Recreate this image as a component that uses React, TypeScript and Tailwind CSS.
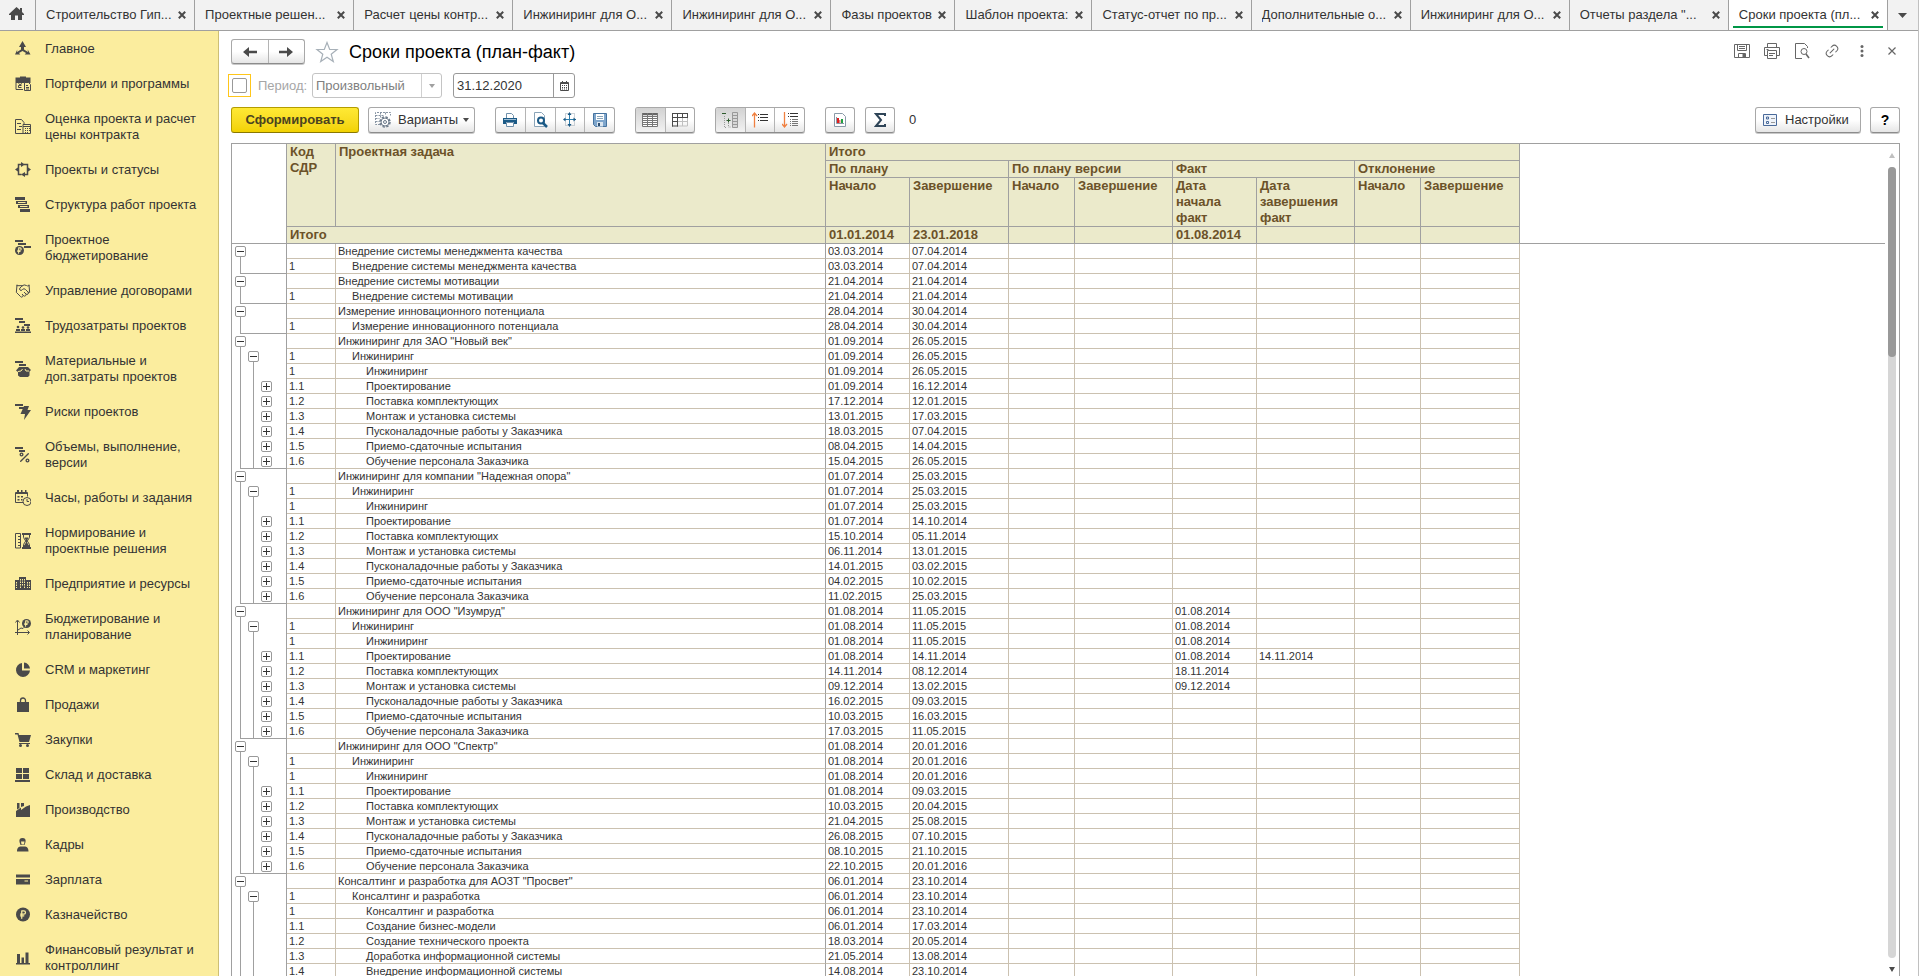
import type { ReactNode } from "react"
import { Handshake, Link2, Percent, RussianRuble } from "lucide-react"

const DARK = "#4a4a4a"
const BLUE = "#1b5a86"

function Icon({ children, size = 16 }: { children: ReactNode; size?: number }) {
  return (
    <svg width={size} height={size} viewBox={`0 0 ${size} ${size}`} fill={DARK} aria-hidden="true" className="shrink-0">
      {children}
    </svg>
  )
}

const menuIcons: Record<string, ReactNode> = {
  main: <path d="M7.500 0l3.500 6H9v2.500l4 2.500-.3-2.500L15.500 13.500H9.700l1.300-1.500-3.500-2-3.500 2 1.300 1.500H0L2.300 8.500 2 11l4-2.500V6H4z" />,
  portfolio: (
    <>
      <path d="M5 1.500V.5h6v1h4.500V7H.5V1.500z" />
      <path d="M1 7v6.500h7M6.500 9.500h-3v2h3M3.500 7.500l1.500 1.200 2-1.200" fill="none" stroke={DARK} />
      <path d="M9.500 6.500h4l2 2v6h-6zM11 9.500h2M11 11.500h3M11 13h3" fill="#FBED9E" stroke={DARK} />
    </>
  ),
  estimate: (
    <>
      <path d="M8 14.500H.5V.5h6l2.500 3V5M2 4.500h4M4 7.500h3M2 10.500h4" fill="none" stroke={DARK} />
      <path d="M8 5.500h7.500v9H8zM8 7.500h7.500" fill="none" stroke={DARK} />
      <path d="M10 9h1v1h-1zM12 9h1v1h-1zM14 9h1v1h-1zM10 11h1v1h-1zM12 11h1v1h-1zM14 11h1v1h-1zM10 13h1v1h-1zM12 13h1v1h-1z" />
    </>
  ),
  projects: (
    <>
      <path d="M6.500 2.500h-3v10h3M9 2.500h3.500v10H9" fill="none" stroke={DARK} strokeWidth="1.500" />
      <path d="M6 0l4 2.500L6 5zM10 10v5l-4-2.500zM0 7.500L3.500 5v5zM16 7.500L12.500 5v5z" />
    </>
  ),
  structure: (
    <>
      <path d="M0 0h10v3H0zM5 12h10v3H5zM1 4h11v3H1zM3 8h11v3H3z" />
      <path d="M3 5.500h7.500M5 9.500h7.500" stroke="#FBED9E" />
    </>
  ),
  budget: (
    <>
      <path d="M0 0h8v2H0zM3 3h8v2H3zM9 6h7v2H9z" />
      <circle cx="4.500" cy="10.500" r="4.500" />
      <RussianRuble x={1} y={7} size={7} color="#FBED9E" strokeWidth={3.500} />
    </>
  ),
  contracts: <Handshake size={16} color={DARK} strokeWidth={1.500} />,
  labor: (
    <>
      <path d="M0 0h8v2H0zM4 3h6v2H4zM9 6h6v2H9z" />
      <circle cx="3" cy="9" r="1.300" />
      <circle cx="8" cy="9.500" r="1.300" />
      <circle cx="13" cy="9.500" r="1.300" />
      <path d="M1 11h4v2H1zM6 11h4v2H6zM11 11h4v2h-4zM0 13.500h16V15H0z" />
    </>
  ),
  materials: (
    <>
      <path d="M0 0h8v2H0zM4 3h7v2H4z" />
      <path d="M4 6h9l3 3-1.500 1.500v4L13 16H5l-2-1.500V11L1 9.500z" />
      <path d="M3 10.500l3-.5 1.500-2M10 8l1 2h3" stroke="#FBED9E" fill="none" />
    </>
  ),
  risks: (
    <>
      <path d="M0 0h8v2H0zM4 3h5v2H4z" />
      <path d="M9 2h5l-1.500 4H16L9 16l1-6H5.500z" />
    </>
  ),
  volumes: (
    <>
      <path d="M0 0h8v2H0zM4 3h6v2H4z" />
      <Percent x={3} y={4} size={13} color={DARK} strokeWidth={2.500} />
    </>
  ),
  hours: (
    <>
      <path d="M.5 2.500h12v4M8 12.500H.5v-10M.5 3.500h12" fill="none" stroke={DARK} />
      <path d="M2 0h2v4H2zM6 0h1.500v4H6zM10 0h1.500v4H10zM2.500 6h2v1.500h-2zM6 6h2v1.500H6zM2.500 9h2v1.500h-2zM6 9h1.500v1.500H6z" />
      <path d="M16 11.500a4 4 0 11-8 0 4 4 0 018 0zM12 9v2.500h2" fill="none" stroke={DARK} />
    </>
  ),
  norms: (
    <>
      <path d="M5.500.5h-5v14.500h5zM3 3.500h2M3 6.500h2M3 9.500h2M3 12.500h2" fill="none" stroke={DARK} />
      <path d="M7 0h9v2H7zM7 14h9v2H7z" />
      <path d="M8.500 2v2.500L10.700 8l-2.200 3.500V14h6v-2.500L12.300 8l2.200-3.500V2" fill="none" stroke={DARK} />
      <path d="M9.500 4.500h4L12 7.500v2l2 3V14H9v-1.500l2-3v-2z" />
    </>
  ),
  company: (
    <>
      <path d="M0 4h4v10H0zM4 1h7v13H4zM11 4h5v10h-5z" />
      <path d="M1.500 6v6M5.500 3v10M7.500 3v7M9.500 3v10M12.500 6v6M14.500 6v6" stroke="#FBED9E" strokeDasharray="1.500 1" />
    </>
  ),
  planning: (
    <>
      <path d="M2.500 16V2M.5 3.500l2-2.500 2 2.500M0 13.500h14M12.500 11.500l2 2-2 2M3 11l3-2 2 .5 2.500-2.500" fill="none" stroke={DARK} />
      <circle cx="11.500" cy="4.500" r="4.500" />
      <RussianRuble x={8} y={1} size={7} color="#FBED9E" strokeWidth={3.500} />
    </>
  ),
  crm: <path d="M7 1v7.500h8A7 7 0 117 1zM9 0.500A6.500 6.500 0 0115 6.500H9z" />,
  sales: (
    <>
      <path d="M2 5h12v10H2z" />
      <path d="M5.500 6V3.500a2.500 2.500 0 015 0V6" fill="none" stroke={DARK} strokeWidth="1.300" />
    </>
  ),
  purchases: (
    <>
      <path d="M0 1h3.500l.5 2h12l-2 7H4.500L2.500 2.500H0z" />
      <path d="M4 11.500h11" stroke={DARK} />
      <circle cx="5.500" cy="13.500" r="1.500" />
      <circle cx="12.500" cy="13.500" r="1.500" />
    </>
  ),
  warehouse: <path d="M1 1h6v5H1zM8 1h6v5H8zM1 7h6v5H1zM8 7h6v5H8zM0 13h15v2H0z" />,
  production: <path d="M1 15V9l5-3.500V8l5-3.500L15 3v12zM2 1h2.500v5L2 7.500zM6 1h3v3L6 5z" />,
  staff: (
    <>
      <path d="M7.500 1c2.500 0 3.500 1.500 3 4l-1 3h-4l-1-3c-.5-2.500.5-4 3-4zM2 14.500c0-4 2-5 4-5h3.500c2 0 4 1 4 5z" />
      <path d="M6 4.500h3.500L9 7.500H6.500z" fill="#FBED9E" />
    </>
  ),
  salary: (
    <>
      <path d="M1 2.500h14v3H1zM1 7h14v5.500H1z" />
      <path d="M9.500 9h3.500" stroke="#FBED9E" />
    </>
  ),
  treasury: (
    <>
      <circle cx="8" cy="7.500" r="7" />
      <RussianRuble x={3} y={2.500} size={10} color="#FBED9E" strokeWidth={3} />
    </>
  ),
  finance: <path d="M2 4h3v9H2zM6.500 7.500h2.500V13H6.500zM10.500 2.500h3V13h-3zM1 13h14v1.500H1z" />,
}

const menu = [
  ["main", "Главное"],
  ["portfolio", "Портфели и программы"],
  ["estimate", "Оценка проекта и расчет\nцены контракта"],
  ["projects", "Проекты и статусы"],
  ["structure", "Структура работ проекта"],
  ["budget", "Проектное\nбюджетирование"],
  ["contracts", "Управление договорами"],
  ["labor", "Трудозатраты проектов"],
  ["materials", "Материальные и\nдоп.затраты проектов"],
  ["risks", "Риски проектов"],
  ["volumes", "Объемы, выполнение,\nверсии"],
  ["hours", "Часы, работы и задания"],
  ["norms", "Нормирование и\nпроектные решения"],
  ["company", "Предприятие и ресурсы"],
  ["planning", "Бюджетирование и\nпланирование"],
  ["crm", "CRM и маркетинг"],
  ["sales", "Продажи"],
  ["purchases", "Закупки"],
  ["warehouse", "Склад и доставка"],
  ["production", "Производство"],
  ["staff", "Кадры"],
  ["salary", "Зарплата"],
  ["treasury", "Казначейство"],
  ["finance", "Финансовый результат и\nконтроллинг"],
]

const tabs = [
  { title: "Строительство Гип...", width: "flex-1" },
  { title: "Проектные решен...", width: "flex-1" },
  { title: "Расчет цены контр...", width: "flex-1" },
  { title: "Инжиниринг для О...", width: "flex-1" },
  { title: "Инжиниринг для О...", width: "flex-1" },
  { title: "Фазы проектов", width: "w-[124px]" },
  { title: "Шаблон проекта:", width: "w-[137px]" },
  { title: "Статус-отчет по пр...", width: "flex-1" },
  { title: "Дополнительные о...", width: "flex-1" },
  { title: "Инжиниринг для О...", width: "flex-1" },
  { title: "Отчеты раздела \"...", width: "flex-1" },
  { title: "Сроки проекта (пл...", width: "flex-1", active: true },
]

type Row = {
  code: string
  name: string
  level: number
  start: string
  end: string
  factStart?: string
  factEnd?: string
  tree: string // one char per level: "-" opened, "+" closed, "|" line
  last?: boolean
}

// a project with its single stage and nothing under it
function shortProject(name: string, start: string, end: string): Row[] {
  return [
    { code: "", name, level: 0, start, end, tree: "-" },
    { code: "1", name, level: 1, start, end, tree: "|", last: true },
  ]
}

function project(
  title: string,
  stage: string,
  start: string,
  end: string,
  tasks: string[][],
  opts: { factStart?: string; leaf?: boolean } = {}
): Row[] {
  const { factStart, leaf } = opts
  return [
    { code: "", name: title, level: 0, start, end, factStart, tree: "-" },
    { code: "1", name: stage, level: 1, start, end, factStart, tree: "|-" },
    { code: "1", name: stage, level: 2, start, end, factStart, tree: "||" },
    ...tasks.map((t, i) => ({
      code: "1." + (i + 1),
      name: t[0],
      level: 2,
      start: t[1],
      end: t[2],
      factStart: t[3],
      factEnd: t[4],
      tree: leaf ? "||" : "||+",
      last: !leaf && i === tasks.length - 1,
    })),
  ]
}

const T = [
  "Проектирование",
  "Поставка комплектующих",
  "Монтаж и установка системы",
  "Пусконаладочные работы у Заказчика",
  "Приемо-сдаточные испытания",
  "Обучение персонала Заказчика",
]

const rows: Row[] = [
  ...shortProject("Внедрение системы менеджмента качества", "03.03.2014", "07.04.2014"),
  ...shortProject("Внедрение системы мотивации", "21.04.2014", "21.04.2014"),
  ...shortProject("Измерение инновационного потенциала", "28.04.2014", "30.04.2014"),
  ...project("Инжиниринг для ЗАО \"Новый век\"", "Инжиниринг", "01.09.2014", "26.05.2015", [
    [T[0], "01.09.2014", "16.12.2014"],
    [T[1], "17.12.2014", "12.01.2015"],
    [T[2], "13.01.2015", "17.03.2015"],
    [T[3], "18.03.2015", "07.04.2015"],
    [T[4], "08.04.2015", "14.04.2015"],
    [T[5], "15.04.2015", "26.05.2015"],
  ]),
  ...project("Инжиниринг для компании \"Надежная опора\"", "Инжиниринг", "01.07.2014", "25.03.2015", [
    [T[0], "01.07.2014", "14.10.2014"],
    [T[1], "15.10.2014", "05.11.2014"],
    [T[2], "06.11.2014", "13.01.2015"],
    [T[3], "14.01.2015", "03.02.2015"],
    [T[4], "04.02.2015", "10.02.2015"],
    [T[5], "11.02.2015", "25.03.2015"],
  ]),
  ...project("Инжиниринг для ООО \"Изумруд\"", "Инжиниринг", "01.08.2014", "11.05.2015", [
    [T[0], "01.08.2014", "14.11.2014", "01.08.2014", "14.11.2014"],
    [T[1], "14.11.2014", "08.12.2014", "18.11.2014"],
    [T[2], "09.12.2014", "13.02.2015", "09.12.2014"],
    [T[3], "16.02.2015", "09.03.2015"],
    [T[4], "10.03.2015", "16.03.2015"],
    [T[5], "17.03.2015", "11.05.2015"],
  ], { factStart: "01.08.2014" }),
  ...project("Инжиниринг для ООО \"Спектр\"", "Инжиниринг", "01.08.2014", "20.01.2016", [
    [T[0], "01.08.2014", "09.03.2015"],
    [T[1], "10.03.2015", "20.04.2015"],
    [T[2], "21.04.2015", "25.08.2015"],
    [T[3], "26.08.2015", "07.10.2015"],
    [T[4], "08.10.2015", "21.10.2015"],
    [T[5], "22.10.2015", "20.01.2016"],
  ]),
  ...project("Консалтинг и разработка для АОЗТ \"Просвет\"", "Консалтинг и разработка", "06.01.2014", "23.10.2014", [
    ["Создание бизнес-модели", "06.01.2014", "17.03.2014"],
    ["Создание технического проекта", "18.03.2014", "20.05.2014"],
    ["Доработка информационной системы", "21.05.2014", "13.08.2014"],
    ["Внедрение информационной системы", "14.08.2014", "23.10.2014"],
  ], { leaf: true }),
]

const indent = ["pl-[2px]", "pl-[16px]", "pl-[30px]"]

function TabBar() {
  return (
    <nav className="flex h-[31px] shrink-0 border-b border-[#a0a0a0] bg-[#f2f2f2]">
      <button aria-label="Начальная страница" className="flex w-9 shrink-0 items-center border-r border-[#a0a0a0] pb-[3px] pl-[9px]">
        <svg width="15" height="13" viewBox="0 0 15 13" fill={DARK}>
          <path d="M7.500 0L11 3V1h2v4l2 2v1h-2v5H9V8.500H6V13H2V8H0V7z" />
        </svg>
      </button>
      {tabs.map((tab, i) => (
        <div
          key={i}
          className={`relative flex min-w-0 shrink-0 items-center justify-between border-r border-[#a0a0a0] pr-[8px] pl-[10px] ${tab.width} ${tab.active ? "bg-white" : ""}`}
        >
          <a href="#" className="truncate pb-px text-clip">{tab.title}</a>
          <button aria-label="Закрыть">
            <svg width="8" height="8" viewBox="0 0 8 8" stroke={DARK} strokeWidth="2">
              <path d="M.8.8l6.400 6.400M7.200.8L.8 7.200" />
            </svg>
          </button>
          {tab.active && <span className="absolute inset-x-1 bottom-[2px] h-[2px] bg-[#009646]" />}
        </div>
      ))}
      <button aria-label="Все вкладки" className="flex w-[30px] shrink-0 items-center justify-center">
        <svg width="9" height="5" viewBox="0 0 9 5" fill={DARK}>
          <path d="M0 0h9L4.500 5z" />
        </svg>
      </button>
    </nav>
  )
}

function Sidebar() {
  return (
    <aside className="w-[219px] shrink-0 overflow-hidden border-r border-[#cdbf75] bg-[#FBED9E]">
      {menu.map(([icon, title]) => (
        <a key={icon} href="#" className="flex items-center gap-[14px] pt-[10px] pb-[9px] pl-[15px] leading-4 whitespace-pre">
          <Icon>{menuIcons[icon]}</Icon>
          {title}
        </a>
      ))}
    </aside>
  )
}

const face = "border border-[#a8a8a8] border-b-[#8c8c8c] rounded-[3px] bg-linear-to-b from-white from-50% to-[#e6e6e6]"

function ToolGroup({ width, children }: { width: string; children: ReactNode }) {
  return (
    <div className={`flex h-[26px] divide-x divide-[#b4b4b4] overflow-hidden shadow-[0_1px_0_#c8c8c8] ${width} ${face}`}>
      {children}
    </div>
  )
}

function Tool({ label, pressed, children }: { label: string; pressed?: boolean; children: ReactNode }) {
  return (
    <button
      aria-label={label}
      className={`flex flex-1 items-center justify-center ${pressed ? "bg-linear-to-b from-[#d2d2d2] to-[#f2f2f2]" : ""}`}
    >
      {children}
    </button>
  )
}

function Header() {
  return (
    <div className="flex items-center pt-2 pr-[18px] pl-3">
      <div className={`flex h-[25px] w-[74px] divide-x divide-[#b4b4b4] shadow-[0_1px_0_#c8c8c8] ${face}`}>
        <button aria-label="Назад" className="flex flex-1 items-center justify-center">
          <svg width="14" height="10" viewBox="0 0 14 10" fill={DARK}>
            <path d="M0 5l6-5v3.800h8v2.400H6V10z" />
          </svg>
        </button>
        <button aria-label="Вперед" className="flex flex-1 items-center justify-center">
          <svg width="14" height="10" viewBox="0 0 14 10" fill={DARK}>
            <path d="M14 5L8 0v3.800H0v2.400h8V10z" />
          </svg>
        </button>
      </div>
      <button aria-label="В избранное" className="ml-[10px]">
        <svg width="24" height="22" viewBox="0 0 24 22" fill="none" stroke="#a7b0b8" strokeWidth="1.200">
          <path d="M12 1.500l2.700 7H22l-5.800 4.700 2.100 7.300L12 16.200l-6.300 4.300 2.100-7.300L2 8.500h7.300z" />
        </svg>
      </button>
      <h1 className="ml-[10px] flex-1 text-[18px] leading-6 text-black">Сроки проекта (план-факт)</h1>
      <div className="flex gap-[14px] pb-[2px]">
        <button aria-label="Сохранить">
          <svg width="16" height="16" viewBox="0 0 16 16" fill="none" stroke="#666">
            <path d="M.5 1.500h15v13H.5zM3.500 1.500v6h9v-6M5 3.500h6M5 5.500h6M4.500 14.500v-4h7v4" />
            <path d="M9 11h2v3H9z" fill="#666" />
          </svg>
        </button>
        <button aria-label="Печать">
          <svg width="16" height="16" viewBox="0 0 16 16" fill="none" stroke="#666">
            <path d="M3.500 4.500v-4h9v4M3.500 12.500H.500v-8h15v8h-3M3.500 7.500h9v8h-9zM5 10.500h6M5 12.500h4M2.500 6.500h2" />
          </svg>
        </button>
        <button aria-label="Предварительный просмотр">
          <svg width="16" height="16" viewBox="0 0 16 16" fill="none" stroke="#666">
            <path d="M8 15.500H1.500V.5h9l3 3V5" />
            <circle cx="10" cy="8.500" r="3" />
            <path d="M12 11l3 4" strokeWidth="1.500" />
          </svg>
        </button>
        <button aria-label="Получить ссылку">
          <Link2 size={16} color="#666" strokeWidth={1.500} className="-rotate-45" />
        </button>
        <button aria-label="Еще" className="flex w-4 items-center justify-center">
          <svg width="4" height="12" viewBox="0 0 4 12" fill="#666">
            <circle cx="2" cy="1.500" r="1.500" />
            <circle cx="2" cy="6" r="1.500" />
            <circle cx="2" cy="10.500" r="1.500" />
          </svg>
        </button>
        <button aria-label="Закрыть" className="flex w-4 items-center justify-center">
          <svg width="8" height="8" viewBox="0 0 8 8" stroke="#666" strokeWidth="1.200">
            <path d="M.5.5l7 7M7.500.5l-7 7" />
          </svg>
        </button>
      </div>
    </div>
  )
}

function Period() {
  return (
    <div className="mt-[9px] flex h-[25px] items-center pl-[9px]">
      <span className="flex size-[23px] items-center justify-center border border-[#ffc61a]">
        <input id="use-period" type="checkbox" className="size-[15px] appearance-none rounded-[2px] border border-[#999] bg-white" />
      </span>
      <label htmlFor="use-period" className="ml-[7px] w-[54px] text-[#a6a6a6]">Период:</label>
      <div className="relative flex h-[25px] w-[130px]">
        <select aria-label="Вид периода" disabled className="w-full appearance-none rounded-[3px] border border-[#c4c4c4] bg-white pl-[3px] text-[#808080] opacity-100">
          <option>Произвольный</option>
        </select>
        <span className="pointer-events-none absolute inset-y-px right-px flex w-5 items-center justify-center border-l border-[#d0d0d0]">
          <svg width="6" height="4" viewBox="0 0 6 4" fill="#a0a0a0">
            <path d="M0 0h6L3 4z" />
          </svg>
        </span>
      </div>
      <div className="ml-[11px] flex h-[25px] w-[122px] overflow-hidden rounded-[3px] border border-[#999] bg-white">
        <input aria-label="Дата окончания" defaultValue="31.12.2020" className="w-[100px] border-r border-[#999] pl-[3px] outline-none" />
        <button aria-label="Выбрать дату" className="flex flex-1 items-center justify-center">
          <svg width="9" height="10" viewBox="0 0 9 10" fill="none" stroke={DARK}>
            <path d="M.5 1.500h8v8h-8zM0 2.500h9M2.500 0v2M6.500 0v2" />
            <path d="M2 4.500h5M2 6.500h5M2 8h5" strokeDasharray="1 1" />
          </svg>
        </button>
      </div>
    </div>
  )
}

function Toolbar() {
  return (
    <div className="mt-[9px] flex h-[26px] items-center pr-[18px] pl-3">
      <button className="h-[26px] w-[128px] rounded-[3px] border border-[#b39c00] border-b-[#8a7800] bg-linear-to-b from-[#ffe934] to-[#f2d200] font-bold text-[#4a4320]">
        Сформировать
      </button>
      <button className={`ml-[9px] flex h-[26px] w-[107px] items-center pl-[6px] shadow-[0_1px_0_#c8c8c8] ${face}`}>
        <svg width="16" height="16" viewBox="0 0 16 16" fill="none" stroke="#8794a3">
          <path d="M5 12.500H.5V.5h15v3M.5 3.500h8M5.500.5v5M10.500.5v3M.5 6.500h4M.5 9.500h4" strokeDasharray="2 1" />
          <circle cx="10" cy="10" r="5" stroke="#6c7a8a" strokeWidth="1.500" strokeDasharray="2.400 1.500" />
          <circle cx="10" cy="10" r="4" fill="white" stroke="#6c7a8a" />
          <circle cx="10" cy="10" r="1.500" stroke="#6c7a8a" />
        </svg>
        <span className="ml-[7px]">Варианты</span>
        <svg width="6" height="4" viewBox="0 0 6 4" fill={DARK} className="ml-[5px]">
          <path d="M0 0h6L3 4z" />
        </svg>
      </button>
      <div className="ml-5 flex gap-5">
        <ToolGroup width="w-[120px]">
          <Tool label="Печать">
            <svg width="16" height="16" viewBox="0 0 16 16">
              <path d="M4.500 6V1.500h5l2 2V6M4.500 10.500h7v4h-7z" fill="white" stroke="#6f90ab" />
              <path d="M1 6h14v6h-3v-2H4v2H1z" fill={BLUE} />
              <path d="M2 7.500h12" stroke="#9dbcd3" />
            </svg>
          </Tool>
          <Tool label="Предварительный просмотр">
            <svg width="16" height="16" viewBox="0 0 16 16">
              <path d="M2.500.5h7l3 3v11h-10z" fill="white" stroke="#8aa4b8" />
              <circle cx="9" cy="8.500" r="3" fill="white" stroke={BLUE} strokeWidth="2" />
              <path d="M11 11l4 4" stroke={BLUE} strokeWidth="2.500" />
            </svg>
          </Tool>
          <Tool label="Параметры страницы">
            <svg width="16" height="16" viewBox="0 0 16 16">
              <path d="M3.500 1.500h9v12h-9z" fill="none" stroke="#9aa7b3" strokeDasharray="1 1" />
              <path d="M7.500 2v12M2 7.500h12" stroke="#2f7fae" />
              <path d="M7.500 0l2 3h-4zM7.500 15l-2-3h4zM1 7.500l2.500-2v4zM14 7.500l-2.500 2v-4z" fill={BLUE} />
            </svg>
          </Tool>
          <Tool label="Сохранить">
            <svg width="14" height="14" viewBox="0 0 14 14">
              <path d="M.5.5h13v13h-11l-2-2z" fill="#7fa6cc" stroke="#46739f" />
              <path d="M3 1h8v6H3z" fill="white" />
              <path d="M4 3.500h6M4 5.500h6" stroke="#8aa4b8" />
              <path d="M4 9h6v4.500H4z" fill="#dbe6f0" />
              <path d="M5 10h2v3H5z" fill="#2f4f70" />
            </svg>
          </Tool>
        </ToolGroup>
        <ToolGroup width="w-[60px]">
          <Tool label="Фиксировать таблицу" pressed>
            <svg width="16" height="14" viewBox="0 0 16 14" fill="none" stroke="#777">
              <path d="M0 0h16v2H0z" fill="#666" stroke="none" />
              <path d="M0 3h16v11H0z" fill="white" stroke="none" />
              <path d="M.5 0v13.500h15V0M0 3.500h16M0 5.500h16M0 7.500h16M0 9.500h16M0 11.500h16M5.500 0v13M10.500 0v13" />
            </svg>
          </Tool>
          <Tool label="Фиксировать заголовки">
            <svg width="16" height="14" viewBox="0 0 16 14" fill="none" stroke={DARK}>
              <path d="M10.500 5v8M15.500 5v8H6M6 8.500h9" stroke="#c0c0c0" />
              <path d="M0 .5h16M.5 0v13.500M15.500 0v5M0 4.500h16M5.500 0v13.500M0 8.500h6M0 13h6M10.500 0v5" />
            </svg>
          </Tool>
        </ToolGroup>
        <ToolGroup width="w-[90px]">
          <Tool label="Группировка" pressed>
            <svg width="16" height="16" viewBox="0 0 16 16" fill="none" stroke="#999">
              <path d="M10.500.5h5v15h-5zM10.500 3.500h5M10.500 6.500h5M10.500 9.500h5M10.500 12.500h5" fill="#d8d8d8" />
              <path d="M2.500 4v11.500H4M6.500 11v4H9" strokeDasharray="1 1" />
              <path d="M0 1.500h4M4.500 8.500h4M6.500 6.500v4" stroke="#2c5a2c" />
            </svg>
          </Tool>
          <Tool label="Уровень вверх">
            <svg width="16" height="16" viewBox="0 0 16 16">
              <path d="M2.500 1v14.500M0 4l2.500-3L5 4" fill="none" stroke="#f08040" strokeWidth="1.300" />
              <path d="M6 2.500h1M8 2.500h8M6 5.500h1M8 5.500h8M6 8.500h1M8 8.500h8" stroke="#333" />
            </svg>
          </Tool>
          <Tool label="Уровень вниз">
            <svg width="16" height="16" viewBox="0 0 16 16">
              <path d="M2.500 0v15M0 12l2.500 3L5 12" fill="none" stroke="#f08040" strokeWidth="1.300" />
              <path d="M6 1.500h1M8 1.500h8M6 4.500h1M8 4.500h8" stroke="#333" />
              <path d="M8 7.500h1M10 7.500h6M8 9.500h1M10 9.500h6M8 11.500h1M10 11.500h6M8 13.500h1M10 13.500h6" stroke="#777" />
            </svg>
          </Tool>
        </ToolGroup>
      </div>
      <div className="ml-5 flex gap-[10px]">
        <ToolGroup width="w-[30px]">
          <Tool label="Диаграмма">
            <svg width="12" height="14" viewBox="0 0 12 14">
              <path d="M.5.5h8l3 3v10H.5z" fill="white" stroke="#8a9aa8" />
              <path d="M2.500 4v6.500H10" fill="none" stroke="#8a9aa8" />
              <path d="M3 5h2v5H3z" fill="#e02020" />
              <path d="M5 7h1.500v3H5z" fill="#e08080" />
              <path d="M7 6h2v4H7z" fill="#20a040" />
            </svg>
          </Tool>
        </ToolGroup>
        <ToolGroup width="w-[30px]">
          <Tool label="Сумма">
            <svg width="13" height="14" viewBox="0 0 13 14" fill="none" stroke="#2f4558" strokeWidth="2">
              <path d="M11 3V1H2l5 6-5 6h9v-2" />
            </svg>
          </Tool>
        </ToolGroup>
      </div>
      <output className="ml-[14px] flex-1">0</output>
      <button className={`mr-[9px] flex h-[26px] w-[106px] items-center pl-[7px] shadow-[0_1px_0_#c8c8c8] ${face}`}>
        <svg width="14" height="12" viewBox="0 0 14 12" fill="none" stroke="#4a6a9a">
          <path d="M.5.5h13v11H.5z" fill="#eef3fa" />
          <path d="M3.500 3h2v2h-2zM3.500 7.500h2v2h-2z" />
          <path d="M8 4.500h4M8 8.500h4" stroke="#999" />
        </svg>
        <span className="ml-2">Настройки</span>
      </button>
      <button className={`h-[26px] w-[30px] text-[14px] font-bold text-black shadow-[0_1px_0_#c8c8c8] ${face}`}>?</button>
    </div>
  )
}

function Tree({ row }: { row: Row }) {
  return (
    <div className="relative flex h-[15px] pl-[2px]">
      {row.tree.split("").map((mark, i) => (
        <span key={i} className="flex w-[13px] flex-col items-center">
          {mark !== "|" && (
            <button
              aria-label={mark === "-" ? "Свернуть" : "Развернуть"}
              className="mt-[2px] flex size-[11px] shrink-0 items-center justify-center rounded-[2px] border border-[#999] bg-white"
            >
              <svg width="7" height="7" viewBox="0 0 7 7" stroke="#333">
                <path d={mark === "-" ? "M0 3.500h7" : "M0 3.500h7M3.500 0v7"} />
              </svg>
            </button>
          )}
          {mark !== "+" && <span className="w-px flex-1 bg-[#a0a0a0]" />}
        </span>
      ))}
      {row.last && <span className="absolute right-0 bottom-0 left-[8px] h-px bg-[#a0a0a0]" />}
    </div>
  )
}

function Report() {
  const th = "border-r border-b border-[#a0a0a0] bg-[#ebeacb] pl-[3px] text-left align-top font-bold"
  const td = "h-[15px] border-r border-b border-[#cbc1b0] pl-[2px] leading-[14px]"
  return (
    <div className="mt-[10px] mr-[18px] ml-3 flex min-h-0 flex-1 border-x border-t border-[#a0a0a0]">
      <div className="min-w-0 flex-1 overflow-hidden">
        <table className="w-full table-fixed border-separate border-spacing-0">
          <colgroup>
            <col className="w-[55px]" />
            <col className="w-[49px]" />
            <col className="w-[490px]" />
            <col className="w-[84px]" />
            <col className="w-[99px]" />
            <col className="w-[66px]" />
            <col className="w-[98px]" />
            <col className="w-[84px]" />
            <col className="w-[98px]" />
            <col className="w-[66px]" />
            <col className="w-[99px]" />
            <col />
          </colgroup>
          <thead className="leading-4 text-[#6b5229]">
            <tr className="h-[17px]">
              <td rowSpan={4} className="border-r border-b border-[#a0a0a0]" />
              <th rowSpan={3} className={th}>Код СДР</th>
              <th rowSpan={3} className={th}>Проектная задача</th>
              <th colSpan={8} className={th}>Итого</th>
              <td rowSpan={4} className="border-b border-[#a0a0a0]" />
            </tr>
            <tr className="h-[17px]">
              <th colSpan={2} className={th}>По плану</th>
              <th colSpan={2} className={th}>По плану версии</th>
              <th colSpan={2} className={th}>Факт</th>
              <th colSpan={2} className={th}>Отклонение</th>
            </tr>
            <tr className="h-[49px]">
              <th className={th}>Начало</th>
              <th className={th}>Завершение</th>
              <th className={th}>Начало</th>
              <th className={th}>Завершение</th>
              <th className={th}>Дата<br />начала<br />факт</th>
              <th className={th}>Дата<br />завершения<br />факт</th>
              <th className={th}>Начало</th>
              <th className={th}>Завершение</th>
            </tr>
            <tr className="h-[17px]">
              <th colSpan={2} className={th}>Итого</th>
              <th className={th}>01.01.2014</th>
              <th className={th}>23.01.2018</th>
              <th className={th} />
              <th className={th} />
              <th className={th}>01.08.2014</th>
              <th className={th} />
              <th className={th} />
              <th className={th} />
            </tr>
          </thead>
          <tbody className="text-[11px] whitespace-nowrap">
            {rows.map((row, i) => (
              <tr key={i}>
                <td className="border-r border-[#a0a0a0]"><Tree row={row} /></td>
                <td className={td}>{row.code}</td>
                <td className={`h-[15px] border-r border-b border-r-[#a0a0a0] border-b-[#cbc1b0] leading-[14px] ${indent[row.level]}`}>{row.name}</td>
                <td className={td}>{row.start}</td>
                <td className={td}>{row.end}</td>
                <td className={td} />
                <td className={td} />
                <td className={td}>{row.factStart}</td>
                <td className={td}>{row.factEnd}</td>
                <td className={td} />
                <td className={td} />
              </tr>
            ))}
          </tbody>
        </table>
      </div>
      <div className="flex w-[14px] shrink-0 flex-col items-center pt-[9px] pr-[2px] pb-1 pl-px">
        <svg width="6" height="5" viewBox="0 0 6 5" fill="#c0c0c0">
          <path d="M3 0l3 5H0z" />
        </svg>
        <div className="mt-[9px] mb-[9px] w-2 flex-1 rounded-full bg-[#d6d6d6]">
          <div className="h-[24%] rounded-full bg-[#999]" />
        </div>
        <svg width="6" height="5" viewBox="0 0 6 5" fill={DARK}>
          <path d="M0 0h6L3 5z" />
        </svg>
      </div>
    </div>
  )
}

export default function App() {
  return (
    <div className="flex h-screen flex-col overflow-hidden border-r border-[#c0c0c0] bg-white font-['Liberation_Sans',Arial,sans-serif] text-[13px] text-[#333]">
      <TabBar />
      <div className="flex min-h-0 flex-1">
        <Sidebar />
        <main className="flex min-w-0 flex-1 flex-col">
          <Header />
          <Period />
          <Toolbar />
          <Report />
        </main>
      </div>
    </div>
  )
}
